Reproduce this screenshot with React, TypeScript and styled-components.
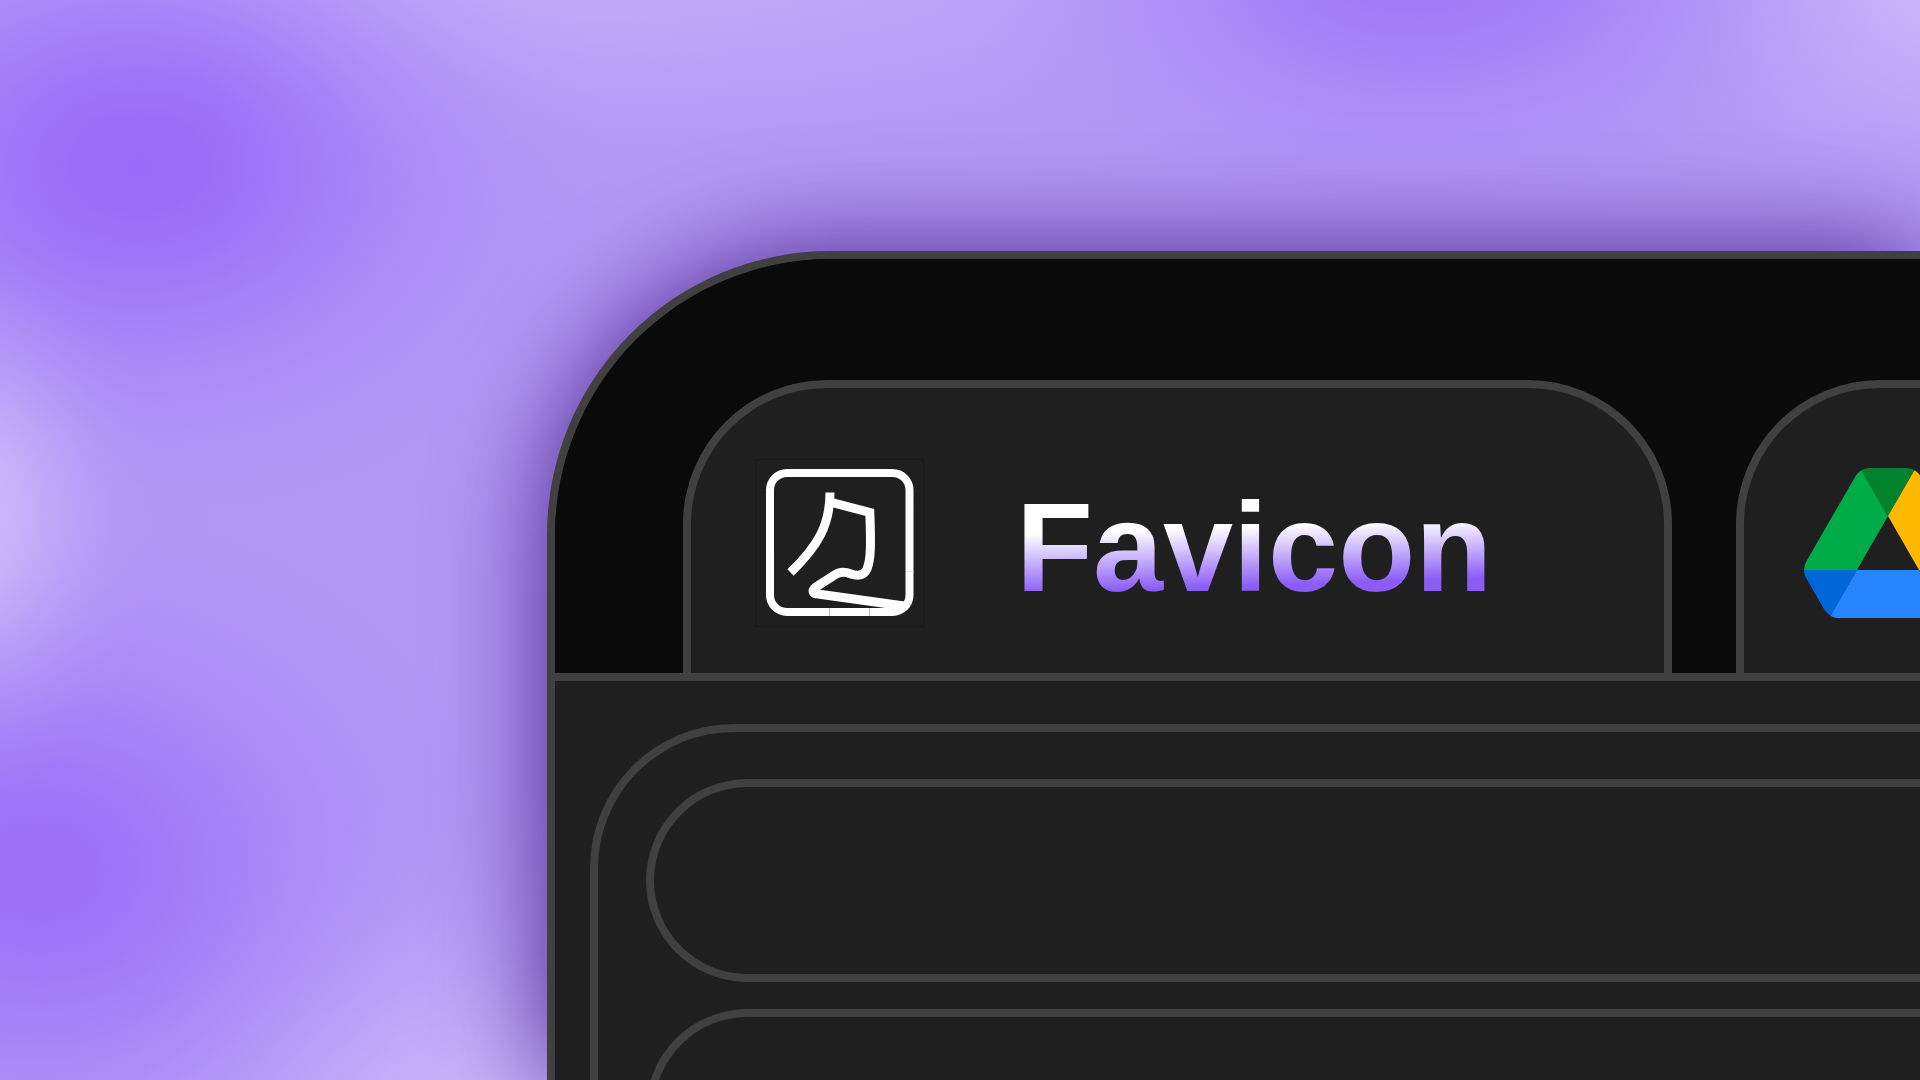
import React from 'react';
import styled, { createGlobalStyle } from 'styled-components';

const line = '#404040';
const surface = '#1f1f1f';

// A blob of colour that fades out along a soft, bell-shaped curve.
const glow = (width: number, height: number, x: number, y: number, rgb: string, strength = 1) => {
  const curve = [1, 0.94, 0.78, 0.58, 0.38, 0.22, 0.1, 0.03, 0];
  const stops = curve.map((a, i) => `rgb(${rgb} / ${(a * strength).toFixed(3)}) ${(i * 100) / (curve.length - 1)}%`);
  return `radial-gradient(ellipse ${width}px ${height}px at ${x}px ${y}px, ${stops.join(', ')})`;
};

const violet = '151 108 248';
const lilac = '205 186 250';

const GlobalStyle = createGlobalStyle`
  *, *::before, *::after { box-sizing: border-box; }
  body { margin: 0; font-family: "Liberation Sans", Arial, sans-serif; }
`;

const Backdrop = styled.div`
  display: flex;
  height: 100vh;
  overflow: hidden;
  padding: 251px 0 0 547px;
  background:
    ${glow(190, 280, -30, 515, lilac)},
    ${glow(480, 370, 140, 165, violet)},
    ${glow(480, 390, 40, 870, violet, 0.88)},
    ${glow(480, 280, 1410, -40, violet, 0.75)},
    ${glow(440, 360, 480, 1140, lilac, 0.9)},
    ${glow(400, 320, 1970, -30, lilac, 0.9)},
    ${glow(1000, 280, 600, -60, lilac, 0.6)},
    #b398f5;
`;

const BrowserWindow = styled.main`
  flex: 1;
  display: flex;
  flex-direction: column;
  min-width: 0;
  overflow: hidden;
  background: ${surface};
  border: 8px solid ${line};
  border-width: 8px 0 0 8px;
  border-top-left-radius: 284px;
  box-shadow: 0 0 108px #4c278c;
`;

const TabStrip = styled.nav`
  display: flex;
  gap: 64px;
  flex: none;
  padding: 121px 0 0 128px;
  background: #0a0a0a;
  border-bottom: 8px solid ${line};
`;

const Tab = styled.button`
  display: flex;
  align-items: center;
  gap: 92px;
  flex: none;
  width: 989px;
  height: 293px;
  margin: 0;
  padding: 24px 60px 0;
  font: inherit;
  text-align: left;
  background: ${surface};
  border: 8px solid ${line};
  border-bottom: 0;
  border-radius: 144px 144px 0 0;
`;

const TabTitle = styled.span`
  padding-top: 10px;
  font-size: 126px;
  font-weight: 700;
  line-height: 160px;
  color: transparent;
  background: linear-gradient(178deg, #fff 41%, #8b5cf6 73%);
  background-clip: text;
  -webkit-background-clip: text;
`;

const Panel = styled.section`
  flex: 1;
  display: flex;
  flex-direction: column;
  gap: 27px;
  min-height: 0;
  margin: 43px 0 0 35px;
  padding: 47px 0 0 48px;
  border: 8px solid ${line};
  border-width: 8px 0 0 8px;
  border-top-left-radius: 144px;
`;

const Field = styled.div`
  flex: none;
  height: 203px;
  border: 8px solid ${line};
  border-right: 0;
  border-radius: 102px 0 0 102px;
`;

function SkateMark() {
  return (
    <svg width="173" height="168" viewBox="-5 0 173 168" fill="none" aria-hidden="true">
      <rect x="-0.5" y="0.5" width="168" height="167" stroke="#191919" />
      <rect x="14" y="14" width="139.5" height="139" rx="17" stroke="#fff" strokeWidth="8" />
      <path d="M74 33.5C74 66 62 87 34.5 113.5" stroke="#fff" strokeWidth="9" />
      <path
        d="M76 43.5L113.8 53.5C115 85 115 100 111 110C108 117 101 117 95 115C88 112 82 113 77 117L60 128C55 132 57 135 62 135L148 147"
        stroke="#fff"
        strokeWidth="9"
      />
      <path d="M73.5 149.5V157M113.5 149.5V157" stroke="#b5b5b5" />
      <path d="M150 112.5H157.5" stroke="#e6e6e6" />
    </svg>
  );
}

function DriveMark() {
  return (
    <svg width="168" height="150" viewBox="0 0 87.3 78" aria-hidden="true">
      <path d="m6.6 66.85 3.85 6.65c.8 1.4 1.95 2.5 3.3 3.3l13.75-23.8h-27.5c0 1.55.4 3.1 1.2 4.5z" fill="#0066da" />
      <path d="m43.65 25-13.75-23.8c-1.35.8-2.5 1.9-3.3 3.3l-25.4 44a9.06 9.06 0 0 0 -1.2 4.5h27.5z" fill="#00ac47" />
      <path d="m73.55 76.8c1.35-.8 2.5-1.9 3.3-3.3l1.6-2.75 7.65-13.25c.8-1.4 1.2-2.95 1.2-4.5h-27.502l5.852 11.5z" fill="#ea4335" />
      <path d="m43.65 25 13.75-23.8c-1.35-.8-2.9-1.2-4.5-1.2h-18.5c-1.6 0-3.15.45-4.5 1.2z" fill="#00832d" />
      <path d="m59.8 53h-32.3l-13.75 23.8c1.35.8 2.9 1.2 4.5 1.2h50.8c1.6 0 3.15-.45 4.5-1.2z" fill="#2684fc" />
      <path d="m73.4 26.5-12.7-22c-.8-1.4-1.95-2.5-3.3-3.3l-13.75 23.8 16.15 28h27.45c0-1.55-.4-3.1-1.2-4.5z" fill="#ffba00" />
    </svg>
  );
}

export default function App() {
  return (
    <>
      <GlobalStyle />
      <Backdrop>
        <BrowserWindow>
          <TabStrip>
            <Tab type="button">
              <SkateMark />
              <TabTitle>Favicon</TabTitle>
            </Tab>
            <Tab type="button" aria-label="Drive">
              <DriveMark />
            </Tab>
          </TabStrip>
          <Panel>
            <Field />
            <Field />
          </Panel>
        </BrowserWindow>
      </Backdrop>
    </>
  );
}
